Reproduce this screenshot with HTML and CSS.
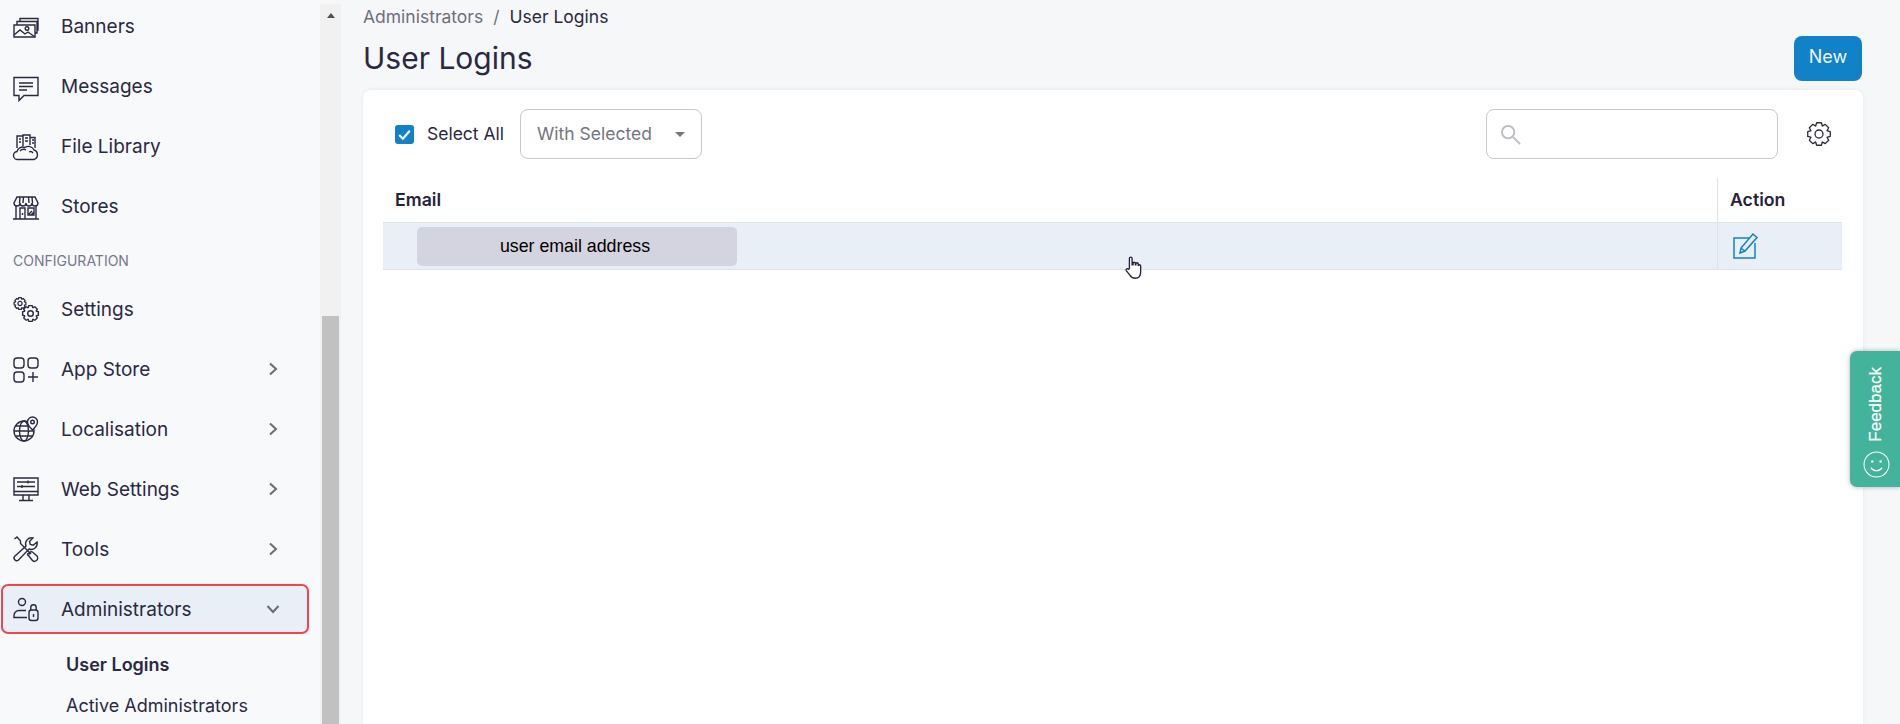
FILE: index.html
```html
<!DOCTYPE html>
<html lang="en">
<head>
<meta charset="utf-8">
<title>User Logins</title>
<link rel="stylesheet" href="styles.css">
</head>
<body>
<svg class="defs" aria-hidden="true"><defs><g id="cog"><path d="M-3.460-7.770-2.390-11.250H2.390L3.460-7.770"/><path transform="rotate(45)" d="M-3.460-7.770-2.390-11.250H2.390L3.460-7.770"/><path transform="rotate(90)" d="M-3.460-7.770-2.390-11.250H2.390L3.460-7.770"/><path transform="rotate(135)" d="M-3.460-7.770-2.390-11.250H2.390L3.460-7.770"/><path transform="rotate(180)" d="M-3.460-7.770-2.390-11.250H2.390L3.460-7.770"/><path transform="rotate(225)" d="M-3.460-7.770-2.390-11.250H2.390L3.460-7.770"/><path transform="rotate(270)" d="M-3.460-7.770-2.390-11.250H2.390L3.460-7.770"/><path transform="rotate(315)" d="M-3.460-7.770-2.390-11.250H2.390L3.460-7.770"/><circle r="4"/></g></defs></svg>
<div class="app">
  <aside class="sidebar">
    <nav class="nav">
      <a class="item"><svg class="ico" viewBox="0 -3 26 26"><path d="M1 9h21v12H1zM4 9V5.500h20v11.500h-2M7 5.500V2.500h18v11.500h-1"/><circle cx="14" cy="12.500" r="1.800"/><path d="M1 19l6-5 5 4 3-2 7 5"/></svg><span class="label">Banners</span></a>
      <a class="item"><svg class="ico" viewBox="0 -3 26 26"><path d="M1 1.500h24v18H11l-5 5v-5H1z"/><path d="M6 7h14M6 10.500h14M6 14h8"/></svg><span class="label">Messages</span></a>
      <a class="item"><svg class="ico" viewBox="0 -1 26 26"><path d="M4 14V2h6v10M10 12V1h7v10M17 11V3.500h5V14M6 5h2M6 8h2M12 4h3M12 7h3M19 6h2M19 9h2"/><path d="M5 25.500a4 4 0 0 1-1-8 6 6 0 0 1 8-4 6 6 0 0 1 9 2.500 5 5 0 0 1 0 9.500zM7 17a5 5 0 0 1 6-1M16 18a3 3 0 0 1 4 1"/></svg><span class="label">File Library</span></a>
      <a class="item"><svg class="ico" viewBox="0 -2 26 26"><path d="M4 2h18l3 6a3 3 0 0 1-6 0 3 3 0 0 1-6 0 3 3 0 0 1-6 0 3 3 0 0 1-6 0zM7 2 6.500 8M10.500 2 10 8M15.500 2l.5 6M19 2l.5 6"/><path d="M3 11v13M23 11v13M0 24h26M7 24V13h5v11M15 13h6v7h-6zM9.500 18v2M16 19l3-3M18 20l3-3"/></svg><span class="label">Stores</span></a>
      <div class="section">CONFIGURATION</div>
      <a class="item"><svg class="ico" viewBox="0 0 26 26"><use href="#cog" transform="translate(7 7.500) scale(.52)" stroke-width="2.400"/><use href="#cog" transform="translate(17.500 17.500) scale(.7)" stroke-width="2"/></svg><span class="label">Settings</span></a>
      <a class="item"><svg class="ico" viewBox="0 -1 26 26"><rect x="1" y="1" width="10" height="10" rx="3"/><rect x="15" y="1" width="10" height="10" rx="3"/><rect x="1" y="15" width="10" height="10" rx="3"/><path d="M20 15v10M15 20h10"/></svg><span class="label">App Store</span><svg class="chev" viewBox="0 0 12 14"><path d="M3 1.500 9 7l-6 5.500"/></svg></a>
      <a class="item"><svg class="ico" viewBox="0 0 26 26"><circle cx="11" cy="15" r="10"/><ellipse cx="11" cy="15" rx="4.500" ry="10"/><path d="M1 15h20M2.500 10h17M2.500 20h17"/><path class="white" d="M19.500 14c-3-3-5-5-5-8a5 5 0 0 1 10 0c0 3-2 5-5 8z"/><circle cx="19.500" cy="6" r="1.800"/></svg><span class="label">Localisation</span><svg class="chev" viewBox="0 0 12 14"><path d="M3 1.500 9 7l-6 5.500"/></svg></a>
      <a class="item"><svg class="ico" viewBox="0 0 26 26"><path d="M1 2h24v17H1zM1 15.500h24M10 19v5M16 19v5M6 24.500h14"/><path d="M4 6h18M4 10.500h18M15 4.500v3M9 9v3"/></svg><span class="label">Web Settings</span><svg class="chev" viewBox="0 0 12 14"><path d="M3 1.500 9 7l-6 5.500"/></svg></a>
      <a class="item"><svg class="ico" viewBox="0 0 26 26"><path d="M1.500 3 4 1l3.500 4v2.500L18 18"/><path d="M16 17l-.5.5a1 1 0 0 0 0 2l3.500 4.500a3 3 0 0 0 5-4l-4.500-4a2 2 0 0 0-3 1.500z"/><path d="M2 20 13 10a6 6 0 0 1 7-8l-3.500 3.500.8 3 3 .8L24 6a6 6 0 0 1-8 7L5.500 24a2.500 2.500 0 0 1-3.500-4z"/></svg><span class="label">Tools</span><svg class="chev" viewBox="0 0 12 14"><path d="M3 1.500 9 7l-6 5.500"/></svg></a>
      <a class="item active"><svg class="ico" viewBox="0 0 26 26"><circle cx="9" cy="6" r="3.500"/><path d="M13 14.500H6a5 5 0 0 0-5 5v2h13"/><rect x="16" y="14" width="9" height="10.500" rx="2.500"/><path d="M17.800 14v-2.500a2.700 2.700 0 0 1 5.400 0V14M20.500 18v3"/></svg><span class="label">Administrators</span><svg class="chev" viewBox="0 0 14 12"><path d="M1.500 3 7 9l5.500-6"/></svg></a>
      <a class="sub current">User Logins</a>
      <a class="sub">Active Administrators</a>
    </nav>
  </aside>
  <div class="track">
    <div class="arrow"></div>
    <div class="thumb"></div>
  </div>
  <main class="main">
    <div class="crumbs"><span class="crumb">Administrators</span><span class="slash">/</span><span>User Logins</span></div>
    <header class="head">
      <h1 class="title">User Logins</h1>
      <button class="new">New</button>
    </header>
    <section class="card">
      <div class="tools">
        <span class="check"><svg viewBox="0 0 18 18"><path d="M4 9.500 7.500 13 14 5.500"/></svg></span>
        <span class="select-all">Select All</span>
        <div class="select"><span class="select-text">With Selected</span><i class="caret"></i></div>
        <div class="search"><svg viewBox="0 0 22 22"><circle cx="8.500" cy="8.500" r="6.500"/><path d="M13.500 13.500 21 21"/></svg></div>
        <svg class="gear" viewBox="-12 -12 24 24"><use href="#cog"/></svg>
      </div>
      <div class="table">
        <div class="row headrow">
          <div class="cell-email">Email</div>
          <div class="cell-action">Action</div>
        </div>
        <div class="row datarow">
          <div class="cell-email"><span class="pill">user email address</span></div>
          <div class="cell-action"><svg class="edit" viewBox="0 0 26 28"><path d="M16 7H1v20h21V12"/><path d="M7 22l1-5L20 3l4 3.500L12 20zM8.500 17.500 12 20"/></svg></div>
        </div>
      </div>
    </section>
  </main>
</div>
<svg class="cursor" viewBox="0 0 20 26"><path d="M6 14V3a1.500 1.500 0 0 1 3 0v7h1V8.500a1.300 1.300 0 0 1 2.600 0V10h.6V9a1.300 1.300 0 0 1 2.600 0v1.500h.4a1.300 1.300 0 0 1 2.300 1V18c0 4-2 7-6 7-3 0-4.500-1-6-3.500l-4-5c-1-1.500 1-3 2.500-1.500z"/></svg>
<aside class="feedback">
  <span class="fb-text">Feedback</span>
  <svg class="fb-face" viewBox="0 0 26 26"><circle cx="13" cy="13" r="12"/><path d="M7.500 16a6.500 6.500 0 0 0 11 0"/><circle class="dot" cx="9" cy="10" r="1.200"/><circle class="dot" cx="17" cy="10" r="1.200"/></svg>
</aside>
</body>
</html>
```

FILE: styles.css
```css
* { box-sizing: border-box; }
html, body { margin: 0; height: 100%; overflow: hidden; }
body { font-family: Inter, "Liberation Sans", sans-serif; color: #2b2942; background: #f6f7f9; }
.defs { position: absolute; width: 0; height: 0; }

.app { display: grid; grid-template-columns: 320px 21px 1fr; height: 724px; }

.sidebar { background: #f8f9fb; overflow: hidden; }
.nav { display: flex; flex-direction: column; margin-top: -4px; }
.item { display: flex; align-items: center; height: 60px; padding: 0 30px 0 13px; font-size: 19px; color: #2b2942; margin-right: 11px; }
.ico { width: 26px; height: 26px; flex: none; fill: none; stroke: #2b2942; stroke-width: 1.400; margin-right: 22px; overflow: visible; }
.ico .white { fill: #f8f9fb; }
.label { flex: 1; }
.chev { width: 12px; height: 14px; flex: none; fill: none; stroke: #6b6b74; stroke-width: 2; }
.section { height: 44px; padding: 6px 13px 0; display: flex; align-items: center; font-size: 14px; color: #77778a; margin-top: -1px; }
.item.active { height: 50px; margin: 5px 11px 5px 1px; padding-left: 10px; padding-right: 27px; background: #e8eff6; border: 2px solid #f24450; border-radius: 7px; }
.item.active .chev { width: 14px; height: 12px; }
.sub { display: flex; align-items: center; height: 41px; padding-left: 66px; font-size: 18px; color: #2b2942; }
.current { font-weight: 600; height: 43px; margin-top: 4px; margin-bottom: -1px; }

.track { background: #f1f1f1; margin-top: 4px; padding: 0 2px; display: flex; flex-direction: column; align-items: stretch; }
.arrow { width: 0; height: 0; margin: 9px auto 0; border: 4.500px solid transparent; border-top: 0; border-bottom: 5px solid #505050; }
.thumb { background: #c1c1c1; flex: 1; margin-top: 298px; }

.main { display: flex; flex-direction: column; padding: 0 37px 0 22px; min-width: 0; }
.crumbs { display: flex; align-items: center; height: 33px; margin-bottom: 1px; font-size: 17.500px; color: #2b2942; }
.crumb { color: #6f6f7d; }
.slash { margin: 0 10px; color: #6f6f7d; }
.head { display: flex; align-items: center; justify-content: space-between; height: 46px; margin-top: 1px; margin-bottom: 9px; }
.title { margin: -1px 0 0; font-size: 30px; font-weight: 400; color: #2b2942; line-height: 40px; }
.new { width: 68px; height: 45px; border: 0; border-radius: 8px; background: #1181c8; color: #eef6fc; font: 400 18px Inter, sans-serif; padding: 0 0 3px; margin-right: 1px; }

.card { flex: 1; background: #fff; border-radius: 8px 8px 0 0; box-shadow: 0 0 4px rgba(40, 50, 80, .08); padding: 19px 21px 0 20px; }
.tools { display: flex; align-items: center; height: 50px; padding-left: 12px; }
.check { width: 19px; height: 19px; border-radius: 3px; background: #1181c8; flex: none; display: flex; }
.check svg { width: 19px; height: 19px; fill: none; stroke: #fff; stroke-width: 2; }
.select-all { font-size: 17.500px; margin: 0 0 2px 13px; }
.select { width: 182px; height: 50px; margin-left: 16px; border: 1px solid #c8c8cc; border-radius: 8px; display: flex; align-items: center; justify-content: space-between; padding: 0 16px; font-size: 17.500px; color: #75757f; }
.select-text { margin-bottom: 2px; }
.caret { width: 0; height: 0; border: 5px solid transparent; border-bottom: 0; border-top: 5px solid #75757f; }
.search { width: 292px; height: 50px; margin-left: auto; border: 1px solid #c8c8cc; border-radius: 8px; display: flex; align-items: center; padding-left: 13px; }
.search svg { width: 21px; height: 21px; fill: none; stroke: #bdbdc3; stroke-width: 2; }
.gear { width: 24px; height: 24px; margin-left: 29px; margin-right: 11px; fill: none; stroke: #2b2942; stroke-width: 1.300; stroke-linejoin: round; flex: none; }

.table { margin-top: 19px; }
.row { display: grid; grid-template-columns: 1fr 125px; }
.headrow { height: 45px; font-size: 17.700px; font-weight: 600; color: #25233c; border-bottom: 1px solid #dfe3e8; }
.headrow > div { display: flex; align-items: center; padding-bottom: 2px; }
.cell-email { padding-left: 12px; }
.cell-action { border-left: 1px solid #dfe3e8; padding-left: 12px; display: flex; align-items: center; }
.datarow { height: 47px; background: #e8eff6; border-bottom: 1px solid #dfe3e8; }
.datarow .cell-email { padding-left: 34px; display: flex; align-items: center; }
.datarow .cell-action { padding: 0 0 2px 15px; }
.pill { width: 320px; height: 39px; background: #d4d3e0; border-radius: 5px; display: flex; align-items: center; justify-content: center; font-family: "Liberation Sans", Arial, sans-serif; font-size: 17.800px; color: #000; padding: 1px 4px 0 0; }
.edit { width: 26px; height: 28px; fill: none; stroke: #1181c8; stroke-width: 1.500; }

.cursor { position: absolute; left: 1124px; top: 255px; width: 18px; height: 25px; fill: #fff; stroke: #26243c; stroke-width: 1.500; }
.feedback { position: absolute; right: 0; top: 351px; width: 50px; height: 136px; background: #44b39b; border-radius: 7px 0 0 7px; box-shadow: 0 0 5px rgba(0, 0, 0, .3); display: flex; flex-direction: column; align-items: center; padding: 16px 0 0 2px; color: #fff; }
.fb-text { writing-mode: vertical-rl; transform: rotate(180deg); font: 400 17px "Liberation Sans", Arial, sans-serif; -webkit-text-stroke: .2px #fff; }
.fb-face { width: 27px; height: 27px; margin-top: 9px; fill: none; stroke: #fff; stroke-width: 1; flex: none; }
.fb-face .dot { fill: #fff; stroke: none; }
```
